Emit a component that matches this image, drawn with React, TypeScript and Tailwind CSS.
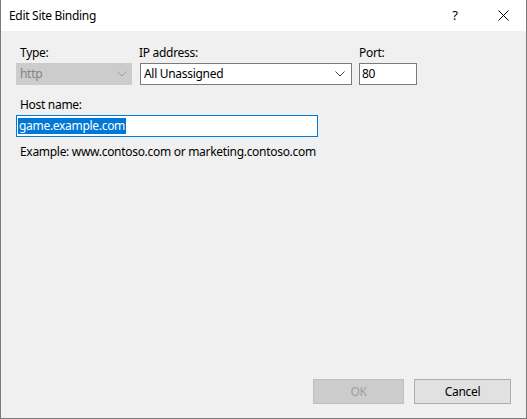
import React from "react";

function Chevron({ color }: { color: string }) {
  return (
    <svg width="10" height="6" viewBox="0 0 10 6" className="shrink-0">
      <polyline points="0.5,0.5 5,5 9.5,0.5" fill="none" stroke={color} strokeWidth="1" />
    </svg>
  );
}

export default function App() {
  return (
    <div
      className="w-[527px] h-[419px] flex flex-col bg-[#f0f0f0] border-x border-b border-[#7a7a7a] text-[12px] tracking-[-0.3px] text-black overflow-hidden"
      style={{ fontFamily: '"Noto Sans", "Liberation Sans", sans-serif' }}
    >
      {/* Title bar */}
      <div className="h-[31px] bg-white flex items-center shrink-0">
        <span className="ml-[8px] text-[12px] leading-none">Edit Site Binding</span>
        <div className="flex-1" />
        <span className="w-[46px] text-center text-[13px] mr-[2px]">?</span>
        <span className="w-[46px] h-[31px] flex items-center justify-center">
          <svg width="11" height="11" viewBox="0 0 11 11">
            <path d="M0.5 0.5 L10.5 10.5 M10.5 0.5 L0.5 10.5" stroke="#000" strokeWidth="1" />
          </svg>
        </span>
      </div>

      {/* Content */}
      <div className="flex-1 flex flex-col pl-[15px] pr-[15px] pt-[14px]">
        <div className="flex gap-[8px] items-end">
          <div className="flex flex-col w-[116px]">
            <span className="ml-[4px] leading-[16px] mb-[2px]">Type:</span>
            <div className="h-[22px] bg-[#cccccc] border border-[#cccccc] flex items-center pl-[3px] pr-[4px]">
              <span className="flex-1 text-[#838383]">http</span>
              <Chevron color="#a0a0a0" />
            </div>
          </div>
          <div className="flex flex-col w-[212px]">
            <span className="-ml-[1px] leading-[16px] mb-[2px]">IP address:</span>
            <div className="h-[22px] bg-white border border-[#7a7a7a] flex items-center pl-[3px] pr-[6px]">
              <span className="flex-1">All Unassigned</span>
              <Chevron color="#404040" />
            </div>
          </div>
          <div className="flex flex-col w-[58px] ml-[-1px]">
            <span className="leading-[16px] mb-[2px]">Port:</span>
            <div className="h-[22px] bg-white border border-[#7a7a7a] flex items-center pl-[2px]">
              <span>80</span>
            </div>
          </div>
        </div>

        <span className="ml-[4px] mt-[12px] leading-[16px] mb-[2px]">Host name:</span>
        <div className="w-[302px] h-[22px] bg-white border border-[#0078d7] flex items-center pl-[1px]">
          <span className="bg-[#0078d7] text-white leading-[16px] px-[1px]">game.example.com</span>
        </div>
        <span className="ml-[4px] mt-[7px] leading-[16px]">Example: www.contoso.com or marketing.contoso.com</span>

        <div className="flex-1" />
        <div className="flex justify-end gap-[10px] mb-[14px] pr-0">
          <div className="w-[91px] h-[25px] bg-[#cccccc] border border-[#bfbfbf] flex items-center justify-center text-[#a0a0a0]">
            OK
          </div>
          <div className="w-[97px] h-[25px] bg-[#e1e1e1] border border-[#adadad] flex items-center justify-center">
            Cancel
          </div>
        </div>
      </div>
    </div>
  );
}
